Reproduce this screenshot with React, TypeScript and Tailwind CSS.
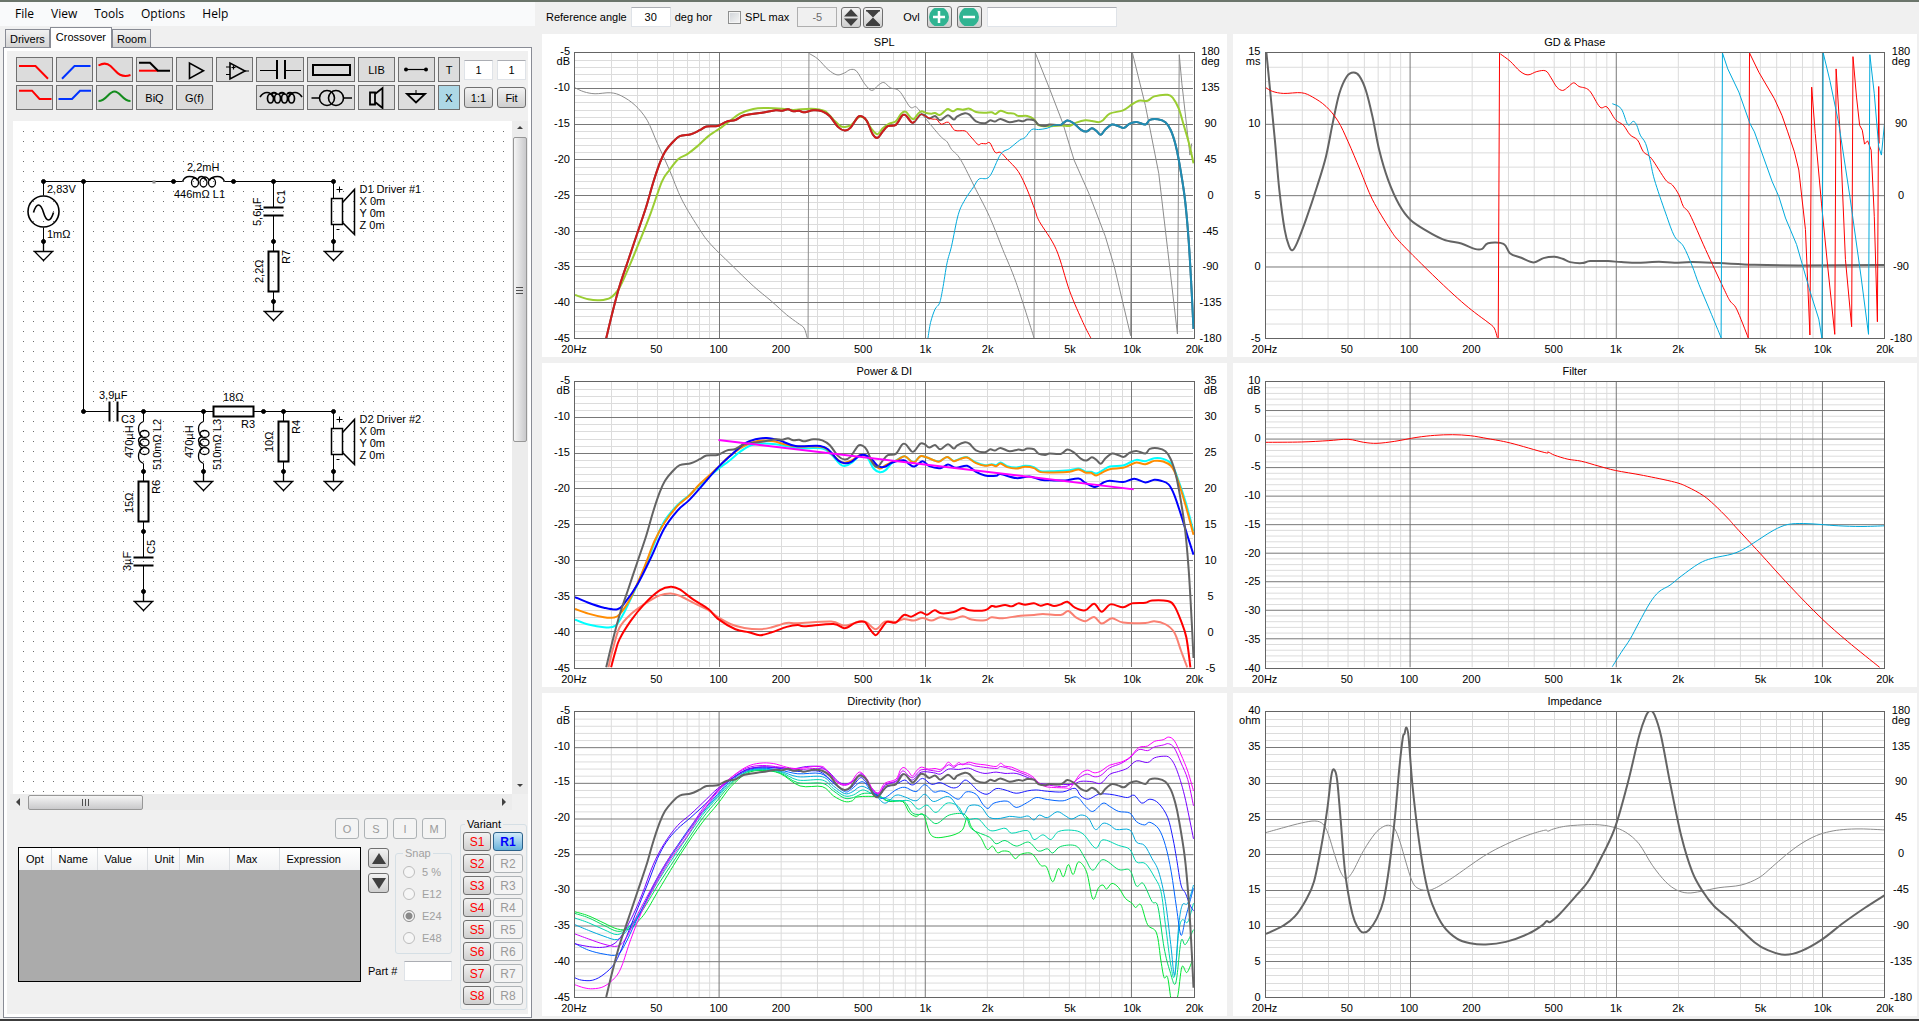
import React, { useState } from 'react'

type Line = {
    color: string
    width: number
    points: string
    straight?: boolean
}

type ChartProps = {
    title: string
    box: [number, number, number, number]
    rows: number
    left: string[]
    leftUnit: string
    right?: string[]
    rightUnit?: string
    lines: Line[]
}

const GREY = '#646464'
const THIN_GREY = '#8c8c8c'

const ON_AXIS =
    '170,1018 185,935 200,860 220,780 240,700 260,620 275,550 290,490 302,455 318,428 335,408 360,402 380,390 395,379 420,377 440,364 460,359 480,345 520,337 550,330 565,331 578,327 590,333 603,331 613,336 635,330 655,333 672,348 690,380 705,391 718,383 735,350 745,349 755,362 768,402 779,413 790,395 802,378 820,374 834,346 842,345 855,366 862,365 875,343 885,345 895,355 908,347 920,360 937,345 950,358 958,348 975,339 985,343 1000,363 1020,369 1032,360 1042,364 1055,356 1075,366 1095,361 1105,363 1115,358 1130,360 1140,373 1155,377 1165,373 1190,374 1205,361 1220,370 1235,388 1248,394 1260,384 1270,392 1280,404 1290,388 1305,373 1320,378 1332,383 1345,370 1360,365 1380,373 1390,359 1408,357 1425,366 1437,390 1447,430 1455,480 1468,590 1477,720 1484,880 1488,990'

function parse(points: string): number[][] {
    return points.split(' ').map((p) => p.split(',').map(Number))
}

// part of the on-axis curve between two x positions, moved vertically by dy
function onAxis(from: number, to: number, dy = 0) {
    return parse(ON_AXIS)
        .filter(([x]) => x >= from && x <= to)
        .map(([x, y]) => `${x},${y + dy}`)
        .join(' ')
}

// Catmull-Rom spline through the points
function toPath(points: string, straight?: boolean) {
    const p = parse(points)
    let d = `M${p[0][0]} ${p[0][1]}`
    for (let i = 0; i < p.length - 1; i++) {
        const a = p[i - 1] || p[i]
        const b = p[i]
        const c = p[i + 1]
        const e = p[i + 2] || c
        if (straight) {
            d += `L${c[0]} ${c[1]}`
        } else {
            d += `C${b[0] + (c[0] - a[0]) / 6} ${b[1] + (c[1] - a[1]) / 6} ${
                c[0] - (e[0] - b[0]) / 6
            } ${c[1] - (e[1] - b[1]) / 6} ${c[0]} ${c[1]}`
        }
    }
    return d
}

const FREQS = [20, 50, 100, 200, 500, 1000, 2000, 5000, 10000, 20000]
const logPos = (f: number) => Math.log10(f / 20) / 3

const GRID_FREQS: number[] = []
for (const decade of [10, 100, 1000, 10000]) {
    for (let i = 1; i < 10; i++) {
        const f = i * decade
        if (f > 20 && f < 20000) GRID_FREQS.push(f)
    }
}

function freqLabel(f: number) {
    if (f === 20) return '20Hz'
    return f >= 1000 ? `${f / 1000}k` : `${f}`
}

const DB_TICKS = ['-5', '-10', '-15', '-20', '-25', '-30', '-35', '-40', '-45']
const DEG_TICKS = ['180', '135', '90', '45', '0', '-45', '-90', '-135', '-180']

const charts: ChartProps[] = [
    {
        title: 'SPL',
        box: [100, 157, 1388, 861],
        rows: 40,
        left: DB_TICKS,
        leftUnit: 'dB',
        right: DEG_TICKS,
        rightUnit: 'deg',
        lines: [
            {
                color: THIN_GREY,
                width: 1,
                points: '100,262 120,274 145,280 180,277 205,287 235,315 262,360 285,430 312,510 340,600 380,690 405,735 450,795 500,860 540,905 575,947 600,972 614,987 621,1016'
            },
            { color: THIN_GREY, width: 1, straight: true, points: '623,1018 625,157' },
            {
                color: THIN_GREY,
                width: 1,
                points: '626,159 645,175 668,207 688,223 705,217 718,207 732,212 750,250 766,270 780,255 793,246 808,262 828,272 852,320 866,320 885,352 920,408 935,425 945,448 965,478 1000,570 1030,650 1060,750 1090,850 1130,1016'
            },
            {
                color: THIN_GREY,
                width: 1,
                straight: true,
                points: '1130,1018 1133,157 1165,265 1195,370 1220,480 1253,580 1290,710 1310,800 1347,1010 1351,157 1380,315 1410,520 1430,750 1452,1005 1456,162 1462,250 1480,465 1484,430'
            },
            {
                color: '#9acd32',
                width: 2,
                points: '100,887 130,900 155,903 180,895 200,865 222,800 245,725 270,640 295,545 312,510 332,477 352,462 375,438 400,407 430,380 445,365 470,340 500,326 530,323 565,325 590,329 630,325 660,332 680,358 695,377 706,380 720,374 735,352 745,350 755,362 765,385 779,402 790,385 805,370 820,363 832,340 842,334 852,350 860,357 870,340 878,333 888,338 900,340 908,338 918,344 930,332 937,326 948,333 958,326 970,328 985,325 1000,335 1020,337 1035,336 1044,341 1055,331 1070,338 1085,340 1095,347 1115,347 1130,357 1140,375 1155,378 1190,376 1210,377 1225,367 1245,360 1260,362 1275,366 1285,360 1300,340 1330,330 1350,312 1365,301 1385,301 1400,288 1430,283 1442,293 1455,325 1465,370 1478,430 1488,490'
            },
            { color: GREY, width: 2, points: onAxis(170, 1488) },
            { color: '#d01c1c', width: 2, points: onAxis(170, 862) },
            {
                color: '#ff0000',
                width: 1,
                points: '862,365 875,343 885,347 900,356 912,358 922,372 938,366 952,390 975,392 985,405 995,420 1005,434 1012,430 1022,431 1031,428 1043,457 1055,457 1070,478 1095,515 1115,570 1132,630 1142,665 1180,750 1210,875 1240,970 1258,1018'
            },
            { color: '#1e8cb4', width: 2, points: onAxis(1190, 1488) },
            {
                color: '#00aadc',
                width: 1,
                points: '892,1018 898,970 908,930 918,912 925,870 935,790 945,740 960,645 975,600 995,560 1007,537 1030,530 1055,463 1075,445 1098,420 1110,412 1125,388 1140,388 1160,384 1175,375 1190,374'
            }
        ]
    },
    {
        title: 'GD & Phase',
        box: [100, 157, 1393, 861],
        rows: 20,
        left: ['15', '10', '5', '0', '-5'],
        leftUnit: 'ms',
        right: ['180', '90', '0', '-90', '-180'],
        rightUnit: 'deg',
        lines: [
            {
                color: GREY,
                width: 2,
                points: '101,157 110,280 120,420 130,570 142,690 152,740 160,752 170,730 190,660 215,560 235,470 250,370 265,280 282,228 297,216 310,226 325,270 340,350 355,450 375,540 400,615 425,660 460,692 500,720 540,732 570,748 587,748 600,731 635,733 650,762 675,775 703,789 725,776 750,772 768,778 785,788 812,791 830,785 870,785 900,788 940,790 985,787 1020,790 1060,788 1120,791 1200,796 1300,798 1493,797'
            },
            {
                color: '#ff0000',
                width: 1,
                points: '100,262 115,273 140,279 180,277 205,290 235,318 262,362 285,425 312,510 340,600 380,690 400,725 450,793 500,858 540,907 570,940 600,970 614,987 621,1016'
            },
            { color: '#ff0000', width: 1, straight: true, points: '623,1018 626,157' },
            {
                color: '#ff0000',
                width: 1,
                points: '628,160 650,182 672,212 690,223 710,213 730,211 742,232 755,260 768,270 780,260 793,247 805,258 828,270 852,320 868,320 887,358 905,375 920,404 937,420 950,455 968,475 1000,540 1015,555 1030,585 1040,620 1055,645 1090,750 1130,865 1145,905 1160,930 1186,1016'
            },
            {
                color: '#ff0000',
                width: 1,
                straight: true,
                points: '1186,1018 1189,157 1210,215 1245,295 1262,345 1275,395 1290,455 1300,510 1315,690 1325,1008 1329,260 1337,400 1351,610 1365,800 1381,1006 1384,205 1393,400 1405,780 1419,983 1422,168 1430,290 1437,375 1443,390 1448,432 1455,422 1463,450 1470,650 1477,968 1480,258 1481,430'
            },
            {
                color: '#00aadc',
                width: 1,
                points: '880,310 900,325 915,373 927,363 935,375 943,405 955,430 965,480 975,540 1000,640 1020,710 1040,740 1060,800 1075,855 1100,935 1125,1016'
            },
            {
                color: '#00aadc',
                width: 1,
                straight: true,
                points: '1125,1018 1128,157 1140,205 1165,275 1190,370 1200,395 1240,545 1255,590 1270,655 1295,735 1325,875 1345,960 1352,1018 1355,157 1370,240 1390,370 1415,590 1440,830 1457,1006 1460,162 1470,280 1480,440 1486,465 1493,370'
            }
        ]
    },
    {
        title: 'Power & DI',
        box: [100, 79, 1388, 861],
        rows: 40,
        left: DB_TICKS,
        leftUnit: 'dB',
        right: ['35', '30', '25', '20', '15', '10', '5', '0', '-5'],
        rightUnit: 'dB',
        lines: [
            {
                color: '#fa8072',
                width: 2,
                points: '175,940 185,885 200,820 225,780 255,750 290,723 315,717 335,724 365,745 400,768 420,788 450,810 480,821 515,825 540,820 575,806 600,807 675,802 705,814 740,801 755,805 775,825 795,802 820,803 838,794 860,799 880,791 900,799 920,789 945,796 970,786 990,796 1020,798 1035,789 1060,792 1100,784 1130,782 1150,779 1190,782 1207,770 1225,790 1245,801 1265,788 1282,808 1305,792 1330,805 1380,806 1400,801 1425,810 1445,835 1460,890 1474,940'
            },
            {
                color: '#ff0000',
                width: 2,
                points: '181,940 190,895 200,855 225,800 255,750 290,708 315,697 335,705 365,735 400,765 420,793 460,825 490,834 515,843 540,835 575,818 600,812 615,816 680,809 705,822 730,805 750,803 762,825 775,843 785,828 800,803 820,805 838,782 855,787 875,774 890,781 907,768 922,777 950,773 970,761 985,768 1020,768 1035,755 1045,757 1065,752 1080,756 1095,747 1110,751 1130,747 1145,754 1160,749 1175,755 1190,750 1205,742 1222,760 1245,768 1265,748 1282,772 1302,750 1330,759 1350,747 1380,745 1395,738 1430,740 1445,755 1460,800 1472,850 1481,940'
            },
            {
                color: '#00ffff',
                width: 2,
                points: '100,796 130,811 165,819 190,815 210,775 235,705 262,620 280,560 300,500 330,450 355,422 380,390 420,343 445,318 470,290 495,270 520,265 550,267 600,278 655,280 675,298 695,327 707,332 722,322 740,300 755,305 770,340 784,351 797,345 810,325 825,312 840,303 855,318 863,319 875,303 890,307 905,315 918,318 935,305 950,317 965,310 980,306 1000,322 1020,330 1035,327 1045,330 1055,322 1070,333 1090,337 1110,332 1130,336 1145,348 1175,348 1210,345 1230,340 1245,349 1258,350 1270,355 1285,345 1300,334 1330,331 1345,322 1360,314 1380,318 1400,309 1420,311 1438,325 1450,360 1470,440 1488,530'
            },
            {
                color: '#ff8c00',
                width: 2,
                points: '100,764 130,778 165,789 185,790 200,780 225,730 255,640 278,560 300,505 330,453 355,424 380,387 420,338 445,305 480,272 510,257 545,258 570,267 600,274 655,275 675,295 695,319 707,322 722,315 740,299 755,303 770,325 784,340 797,330 825,313 840,303 855,319 863,320 875,303 890,307 905,315 918,319 935,305 950,318 965,311 980,307 1000,324 1020,332 1035,329 1045,333 1055,325 1070,336 1090,340 1110,335 1130,339 1145,351 1175,352 1210,350 1230,343 1245,352 1258,353 1270,361 1285,351 1300,342 1330,338 1345,330 1360,322 1380,327 1400,317 1420,319 1438,333 1450,365 1470,450 1488,540'
            },
            {
                color: '#0000ff',
                width: 2,
                points: '100,728 130,745 165,760 195,765 212,745 240,690 270,610 300,522 330,467 355,437 380,400 420,338 450,300 480,265 505,252 530,248 560,256 595,272 650,272 670,285 690,315 705,324 720,320 740,300 752,300 768,315 780,333 795,335 812,322 838,315 850,327 862,334 880,318 895,333 920,339 937,328 955,338 980,332 1000,350 1020,361 1045,362 1055,357 1090,369 1120,364 1145,374 1175,376 1200,376 1230,370 1245,383 1268,396 1285,383 1300,377 1330,381 1355,371 1380,382 1400,374 1415,377 1432,388 1445,420 1460,480 1475,545 1488,600'
            },
            { color: GREY, width: 2, points: onAxis(170, 1488, -78) },
            { color: '#ff00ff', width: 2, straight: true, points: '422,254 1354,403' }
        ]
    },
    {
        title: 'Filter',
        box: [100, 79, 1393, 861],
        rows: 50,
        left: ['10', '5', '0', '-5', '-10', '-15', '-20', '-25', '-30', '-35', '-40'],
        leftUnit: 'dB',
        lines: [
            {
                color: '#ff0000',
                width: 1,
                points: '100,261 180,260 240,256 285,252 320,261 350,264 390,258 440,246 480,240 520,238 560,241 600,250 650,263 728,292 735,290 750,300 780,312 810,318 850,333 887,346 950,361 1020,381 1050,396 1085,422 1110,450 1140,490 1160,520 1212,595 1280,695 1351,792 1410,862 1482,940'
            },
            {
                color: '#00aadc',
                width: 1,
                points: '880,938 900,895 920,855 940,805 965,745 985,712 1010,692 1035,665 1075,627 1105,611 1150,598 1180,580 1215,550 1245,525 1275,509 1310,506 1350,509 1390,513 1440,515 1493,513'
            }
        ]
    },
    {
        title: 'Directivity (hor)',
        box: [100, 76, 1388, 864],
        rows: 40,
        left: DB_TICKS,
        leftUnit: 'dB',
        lines: [
            {
                color: '#00e632',
                width: 1,
                points: '100,681 130,693 165,715 195,733 222,733 245,705 262,675 290,610 340,500 385,412 420,355 450,302 485,262 520,253 560,262 605,300 655,302 680,330 705,347 722,345 735,333 782,333 805,347 835,347 850,380 865,392 882,387 900,450 935,453 968,435 980,395 990,425 1010,455 1025,492 1037,482 1048,502 1060,497 1075,500 1088,520 1100,507 1125,505 1145,540 1158,545 1172,590 1185,550 1196,575 1207,538 1218,568 1230,530 1248,560 1262,642 1275,608 1285,600 1293,612 1305,595 1320,608 1335,640 1350,655 1358,668 1370,660 1385,720 1405,745 1415,830 1422,880 1430,880 1440,960 1452,940 1462,848 1473,865 1485,830'
            },
            {
                color: '#00dc64',
                width: 1,
                points: '100,686 130,699 165,722 195,740 218,730 245,690 290,592 340,490 385,400 420,343 450,295 485,258 520,252 560,260 600,290 655,292 680,315 705,337 725,335 750,322 782,328 800,345 838,347 858,383 885,388 910,414 940,388 975,387 990,430 1030,455 1045,475 1065,465 1090,482 1118,470 1140,497 1160,490 1172,503 1190,483 1225,482 1245,520 1262,555 1285,523 1320,553 1345,555 1360,603 1375,595 1395,650 1408,665 1422,790 1435,860 1448,897 1460,770 1470,780 1488,735'
            },
            {
                color: '#00d7b4',
                width: 1,
                points: '100,700 130,714 165,735 195,750 218,730 245,685 290,580 340,478 385,390 420,335 450,290 485,258 520,250 560,257 600,282 655,282 680,308 705,330 725,327 745,312 765,322 790,335 820,345 850,345 870,370 890,358 910,380 935,352 960,362 978,400 1005,400 1032,435 1065,428 1080,443 1115,435 1130,462 1150,448 1168,462 1185,438 1215,434 1240,445 1268,488 1285,463 1320,480 1345,492 1360,530 1380,535 1400,575 1415,620 1425,720 1438,850 1446,872 1455,740 1463,705 1475,712 1488,655'
            },
            {
                color: '#00aadc',
                width: 1,
                points: '100,720 130,737 165,755 195,765 215,740 240,700 290,570 330,485 375,400 420,330 450,285 485,255 520,248 560,255 600,272 655,272 680,300 705,323 722,318 738,303 750,303 770,320 795,352 820,328 840,333 865,345 885,325 905,347 940,333 970,385 985,360 1010,362 1030,395 1055,398 1075,392 1100,395 1117,391 1130,403 1142,388 1160,396 1182,378 1200,390 1215,400 1235,388 1252,397 1268,432 1285,413 1300,418 1315,432 1345,433 1360,470 1378,480 1395,520 1410,560 1425,650 1437,780 1446,872 1455,720 1463,660 1475,655 1488,600'
            },
            {
                color: '#0064ff',
                width: 1,
                points: '100,777 130,797 165,809 195,811 212,780 235,715 262,640 290,565 330,480 375,395 420,325 450,280 485,252 520,246 560,252 600,263 650,262 675,285 705,317 720,310 738,290 750,290 765,315 790,338 820,312 840,304 865,317 885,296 905,318 920,315 935,320 960,340 978,318 1000,325 1015,355 1027,368 1040,352 1070,346 1090,365 1115,350 1135,335 1160,341 1195,345 1225,333 1245,360 1262,377 1285,352 1300,362 1320,377 1345,382 1360,408 1378,418 1390,410 1410,430 1425,480 1438,560 1450,670 1460,752 1470,700 1480,650 1488,610'
            },
            {
                color: '#1919ff',
                width: 1,
                points: '100,881 115,888 140,888 165,870 190,835 210,775 235,690 262,600 285,520 305,470 330,430 360,395 400,345 425,308 450,280 485,250 520,243 560,247 600,256 640,254 660,265 685,297 705,312 720,305 738,277 748,280 765,310 782,330 797,305 820,295 840,282 852,295 862,295 880,277 900,295 920,290 945,305 960,302 975,282 990,295 1005,315 1025,325 1045,308 1065,312 1090,322 1115,315 1135,312 1160,316 1195,318 1222,307 1235,330 1252,340 1275,325 1300,325 1320,330 1340,335 1355,328 1372,352 1390,340 1410,353 1430,395 1442,460 1450,520 1460,600 1470,625 1480,660 1488,678'
            },
            {
                color: '#7800ff',
                width: 1,
                points: '100,778 125,785 155,789 180,783 200,762 225,705 250,630 275,540 300,475 330,420 360,385 395,340 420,308 450,280 485,252 520,242 560,245 590,248 620,241 650,242 670,258 690,286 705,294 720,288 738,268 748,270 765,305 782,325 797,297 820,287 830,270 838,264 857,282 877,258 905,260 920,264 938,249 961,250 983,246 1000,255 1020,262 1045,258 1065,262 1090,262 1115,274 1130,282 1145,293 1175,295 1215,295 1235,286 1260,287 1280,292 1300,265 1320,256 1340,246 1360,224 1385,229 1400,215 1420,210 1435,215 1450,250 1468,330 1488,460'
            },
            {
                color: '#c800ff',
                width: 1,
                points: '100,748 130,763 165,779 195,785 215,760 240,690 280,590 315,510 350,445 385,372 420,312 450,275 485,246 520,238 560,243 600,250 650,247 670,260 690,290 705,298 720,290 738,265 748,267 765,305 782,322 797,295 820,285 830,262 838,255 857,275 877,251 905,254 920,255 938,236 950,244 961,235 983,234 1000,240 1045,247 1055,241 1080,250 1115,268 1130,280 1142,294 1165,298 1200,302 1220,288 1235,272 1250,264 1265,272 1280,268 1300,245 1325,232 1345,215 1365,190 1385,193 1400,182 1420,176 1432,172 1445,185 1460,230 1475,280 1488,360'
            },
            {
                color: '#ff00ff',
                width: 1,
                points: '100,902 120,911 140,914 165,907 190,880 205,845 225,765 250,680 280,600 315,520 350,455 385,380 420,318 450,275 485,242 515,231 545,232 575,243 600,247 650,240 665,253 685,285 705,296 720,287 735,260 745,262 758,285 770,315 782,320 795,292 820,280 830,252 838,244 848,255 857,270 866,255 877,243 893,249 908,247 920,250 930,240 938,228 950,240 961,229 970,236 983,228 1000,233 1020,236 1045,241 1055,231 1065,240 1080,243 1100,255 1115,262 1130,275 1142,292 1160,303 1200,306 1210,308 1220,290 1235,262 1250,252 1265,260 1280,255 1300,237 1325,228 1345,213 1365,184 1385,179 1400,165 1420,160 1432,152 1445,163 1460,205 1475,255 1488,315'
            },
            { color: GREY, width: 2, points: onAxis(170, 1488, -79) }
        ]
    },
    {
        title: 'Impedance',
        box: [100, 76, 1393, 864],
        rows: 40,
        left: ['40', '35', '30', '25', '20', '15', '10', '5', '0'],
        leftUnit: 'ohm',
        right: DEG_TICKS,
        rightUnit: 'deg',
        lines: [
            {
                color: THIN_GREY,
                width: 1,
                points: '100,441 140,426 180,412 210,406 228,415 240,445 255,510 268,560 280,580 295,560 320,495 345,445 362,425 376,419 390,430 402,470 415,530 428,585 440,608 460,616 480,610 520,578 590,513 640,477 690,449 728,434 735,437 748,430 780,421 840,417 880,424 910,440 940,475 970,540 1000,590 1025,615 1050,624 1080,619 1120,608 1170,600 1210,578 1240,545 1270,510 1305,475 1340,450 1370,438 1400,432 1440,430 1493,433'
            },
            {
                color: GREY,
                width: 2,
                points: '100,748 140,722 165,695 190,645 208,590 225,480 238,370 247,270 253,250 260,280 268,400 278,560 290,660 300,710 312,738 320,744 332,736 350,700 365,645 378,540 390,400 400,250 408,155 412,142 416,123 421,150 430,300 445,470 460,590 475,660 500,725 530,762 560,776 595,780 640,772 690,748 722,722 732,709 740,712 760,690 800,630 825,590 850,530 885,430 915,290 940,150 955,90 965,72 975,85 990,150 1010,290 1035,450 1060,560 1085,622 1110,665 1150,710 1200,773 1230,797 1268,811 1305,800 1351,766 1400,715 1450,668 1493,631'
            }
        ]
    }
]

function Ticks({ labels, unit, side }: { labels: string[]; unit: string; side: 'left' | 'right' }) {
    return (
        <div
            className={
                side === 'left'
                    ? 'relative -mt-px mb-px flex w-8 flex-col items-end justify-between pr-1 leading-3'
                    : 'relative -mt-px mb-px flex w-8 flex-col items-center justify-between leading-3'
            }>
            {labels.map((label) => (
                <span key={label} className="flex h-0 items-center">
                    {label}
                </span>
            ))}
            <span className={side === 'left' ? 'absolute top-1 right-1' : 'absolute top-1'}>{unit}</span>
        </div>
    )
}

function Chart({ title, box, rows, left, leftUnit, right, rightUnit, lines }: ChartProps) {
    const [x0, y0, w, h] = box
    const step = rows / (left.length - 1)
    return (
        <section className="flex min-h-0 min-w-0 flex-col bg-white">
            <h2 className="h-[18px] text-center leading-4">{title}</h2>
            <div className="flex min-h-0 flex-1">
                <Ticks labels={left} unit={leftUnit} side="left" />
                <svg
                    className="h-full min-w-0 flex-1 border border-[#646464]"
                    viewBox={`${x0} ${y0} ${w} ${h}`}
                    preserveAspectRatio="none">
                    <g shapeRendering="crispEdges" strokeWidth="1">
                        {Array.from({ length: rows - 1 }, (_, i) => i + 1)
                            .filter((i) => i % step !== 0)
                            .map((i) => (
                                <path
                                    key={i}
                                    d={`M${x0} ${y0 + (h * i) / rows}h${w}`}
                                    stroke="#dcdcdc"
                                    vectorEffect="non-scaling-stroke"
                                />
                            ))}
                        {GRID_FREQS.map((f) => (
                            <path
                                key={f}
                                d={`M${x0 + w * logPos(f)} ${y0}v${h}`}
                                stroke={[100, 1000, 10000].includes(f) ? '#787878' : '#dcdcdc'}
                                vectorEffect="non-scaling-stroke"
                            />
                        ))}
                        {left.slice(1, -1).map((label, i) => (
                            <path
                                key={label}
                                d={`M${x0} ${y0 + (h * (i + 1) * step) / rows}h${w}`}
                                stroke="#787878"
                                vectorEffect="non-scaling-stroke"
                            />
                        ))}
                    </g>
                    {lines.map((line, i) => (
                        <path
                            key={i}
                            d={toPath(line.points, line.straight)}
                            fill="none"
                            stroke={line.color}
                            strokeWidth={line.width}
                            strokeLinejoin="round"
                            vectorEffect="non-scaling-stroke"
                        />
                    ))}
                </svg>
                {right ? (
                    <Ticks labels={right} unit={rightUnit || ''} side="right" />
                ) : (
                    <div className="w-8" />
                )}
            </div>
            <div className="relative mx-8 h-[18px]">
                {FREQS.map((f) => (
                    <span
                        key={f}
                        className="absolute top-1 -translate-x-1/2 leading-3"
                        style={{ left: `${logPos(f) * 100}%` }}>
                        {freqLabel(f)}
                    </span>
                ))}
            </div>
        </section>
    )
}

function Dot({ x, y }: { x: number; y: number }) {
    return <circle cx={x} cy={y} r="2" fill="#000" />
}

// dot, short lead and the triangle below it
function Ground({ x, y }: { x: number; y: number }) {
    return (
        <g>
            <Dot x={x} y={y} />
            <path d={`M${x} ${y}v10M${x - 9} ${y + 10}h18l-9 9z`} strokeWidth="1.3" />
        </g>
    )
}

function Resistor({ x, y, horizontal }: { x: number; y: number; horizontal?: boolean }) {
    return horizontal ? (
        <rect x={x} y={y - 5} width="40" height="10" strokeWidth="2" />
    ) : (
        <rect x={x - 5} y={y} width="10" height="40" strokeWidth="2" />
    )
}

function Coil({ transform }: { transform: string }) {
    return (
        <g transform={transform} strokeWidth="1.3">
            <path d="M0 0q2 -5 7 -5q6 0 8 4M42 0q-2 -5 -7 -5q-6 0 -8 4" />
            <path d="M15 -1q1 -4 4 -4q3 0 4 4M20 -4q4 -2 7 3" />
            <ellipse cx="12.500" cy="1" rx="3.500" ry="4.500" />
            <ellipse cx="21" cy="1" rx="3.500" ry="4.500" />
            <ellipse cx="29.500" cy="1" rx="3.500" ry="4.500" />
        </g>
    )
}

function Label({ x, y, vertical, children }: { x: number; y: number; vertical?: boolean; children: string }) {
    return (
        <text
            x={x}
            y={y}
            fill="#000"
            stroke="none"
            transform={vertical ? `rotate(-90 ${x} ${y})` : undefined}>
            {children}
        </text>
    )
}

function Driver({ x, y, name }: { x: number; y: number; name: string }) {
    return (
        <g>
            <Dot x={x} y={y} />
            <path d={`M${x} ${y}v17M${x} ${y + 43}v17`} />
            <rect x={x - 2} y={y + 17} width="11" height="26" strokeWidth="1.5" />
            <path d={`M${x + 9} ${y + 21}l12 -13v45l-12 -12`} strokeWidth="1.5" />
            <Ground x={x} y={y + 60} />
            <path d={`M${x + 3} ${y + 8}h6m-3 -3v6M${x + 3} ${y + 48}h3`} />
            <Label x={x + 26} y={y + 11}>
                {name}
            </Label>
            <Label x={x + 26} y={y + 23}>
                X 0m
            </Label>
            <Label x={x + 26} y={y + 35}>
                Y 0m
            </Label>
            <Label x={x + 26} y={y + 47}>
                Z 0m
            </Label>
        </g>
    )
}

function Schematic() {
    return (
        <svg className="h-full w-full text-[11px]" fill="none" stroke="#000">
            <defs>
                <pattern id="dots" width="10" height="10" patternUnits="userSpaceOnUse">
                    <rect x="0" y="0" width="1" height="1" fill="#6e6e6e" stroke="none" />
                </pattern>
            </defs>
            <svg x="10" y="10" width="482" height="661">
                <rect width="100%" height="100%" fill="url(#dots)" stroke="none" />
            </svg>

            {/* woofer branch */}
            <g strokeWidth="1" transform="translate(0.5 0.5)">
                <path d="M30 60h139M211 60h109M30 60v14M30 106v14M70 60v230" />
                <circle cx="30" cy="90" r="15.500" strokeWidth="1.6" />
                <path d="M20 91c3 -10 7 -10 10 0s7 10 10 0" strokeWidth="1.6" />
                <Ground x={30} y={120} />
                <Dot x={30} y={60} />
                <Dot x={70} y={60} />
                <Dot x={160} y={60} />
                <Dot x={220} y={60} />
                <Dot x={260} y={60} />
                <rect x="139" y="59" width="3" height="3" fill="#8c8c8c" stroke="none" />
                <Coil transform="translate(169 60)" />
                <path d="M260 60v26M260 94v36M260 170v10" />
                <path d="M250 86h20M250 94h20" strokeWidth="2" />
                <Dot x={260} y={120} />
                <Resistor x={260} y={130} />
                <Ground x={260} y={180} />
                <Driver x={320} y={60} name="D1 Driver #1" />
            </g>
            <Label x={34} y={72}>
                2,83V
            </Label>
            <Label x={34} y={117}>
                1mΩ
            </Label>
            <Label x={174} y={50}>
                2,2mH
            </Label>
            <Label x={161} y={77}>
                446mΩ L1
            </Label>
            <Label x={272} y={83} vertical>
                C1
            </Label>
            <Label x={248} y={105} vertical>
                5,6µF
            </Label>
            <Label x={250} y={162} vertical>
                2,2Ω
            </Label>
            <Label x={277} y={143} vertical>
                R7
            </Label>

            {/* tweeter branch */}
            <g strokeWidth="1" transform="translate(0.5 0.5)">
                <path d="M70 290h26M104 290h96M240 290h80" />
                <path d="M96 280v20M104 280v20" strokeWidth="2" />
                <Dot x={70} y={290} />
                <Dot x={130} y={290} />
                <Dot x={190} y={290} />
                <Dot x={250} y={290} />
                <Dot x={270} y={290} />
                <Resistor x={200} y={290} horizontal />
                <path d="M130 290v10M130 342v18M130 400v36M130 444v26" />
                <Coil transform="translate(130 300) rotate(90) scale(1 -1)" />
                <Dot x={130} y={350} />
                <Resistor x={130} y={360} />
                <Dot x={130} y={410} />
                <path d="M120 436h20M120 444h20" strokeWidth="2" />
                <Ground x={130} y={470} />
                <path d="M190 290v10M190 342v8M270 290v10M270 340v10" />
                <Coil transform="translate(190 300) rotate(90) scale(1 -1)" />
                <Ground x={190} y={350} />
                <Resistor x={270} y={300} />
                <Ground x={270} y={350} />
                <Driver x={320} y={290} name="D2 Driver #2" />
            </g>
            <Label x={86} y={278}>
                3,9µF
            </Label>
            <Label x={108} y={302}>
                C3
            </Label>
            <Label x={210} y={280}>
                18Ω
            </Label>
            <Label x={228} y={307}>
                R3
            </Label>
            <Label x={120} y={337} vertical>
                470µH
            </Label>
            <Label x={148} y={349} vertical>
                510mΩ L2
            </Label>
            <Label x={180} y={337} vertical>
                470µH
            </Label>
            <Label x={208} y={349} vertical>
                510mΩ L3
            </Label>
            <Label x={260} y={331} vertical>
                10Ω
            </Label>
            <Label x={287} y={313} vertical>
                R4
            </Label>
            <Label x={120} y={392} vertical>
                15Ω
            </Label>
            <Label x={147} y={373} vertical>
                R6
            </Label>
            <Label x={118} y={450} vertical>
                3µF
            </Label>
            <Label x={142} y={433} vertical>
                C5
            </Label>
        </svg>
    )
}

function Tool({ label, wide, children }: { label: string; wide?: boolean; children: React.ReactNode }) {
    return (
        <button
            aria-label={label}
            className="flex h-[25px] items-center justify-center border border-[#707070] bg-[#dcdcdc]">
            <svg
                width={wide ? 46 : 35}
                height="23"
                viewBox={wide ? '1 1 46 23' : '1 1 35 23'}
                fill="none"
                stroke="#000"
                strokeWidth="2">
                {children}
            </svg>
        </button>
    )
}

function TextTool({ children, active }: { children: string; active?: boolean }) {
    return (
        <button
            className={
                active
                    ? 'h-[25px] border border-[#707070] bg-[#add8e6]'
                    : 'h-[25px] border border-[#707070] bg-[#dcdcdc]'
            }>
            {children}
        </button>
    )
}

const winButton = 'rounded-[3px] border border-[#707070] bg-gradient-to-b from-[#f2f2f2] to-[#cfcfcf]'
const disabledButton = 'rounded-[3px] border border-[#adb2b5] bg-[#f4f4f4] text-[#9a9a9a]'
const textBox = 'border border-[#dfe3e8] border-t-[#abadb3] bg-white outline-none'

function Toolbar() {
    return (
        <div className="grid grid-cols-[repeat(6,37px)_48px_48px_37px_37px_22px_30px_30px] gap-[3px] pt-[6px] pl-[9px]">
            <Tool label="Low pass">
                <path d="M3 9h16.500l12.500 12.700" stroke="#f00" />
            </Tool>
            <Tool label="High pass">
                <path d="M6 21.700l12.500 -12.700h16" stroke="#0032ff" />
            </Tool>
            <Tool label="All pass">
                <path d="M2.500 8.500q7 -4 12 0.500q3 3 5 5q6 7 15 4" stroke="#f00" />
            </Tool>
            <Tool label="Shelf">
                <path d="M3 13.700h19" stroke="#f00" />
                <path d="M3 5.700h11l8 8h12" />
            </Tool>
            <Tool label="Buffer">
                <path d="M13.500 6v15.500l14 -7.800z" strokeWidth="1.6" />
            </Tool>
            <Tool label="Op amp">
                <path d="M14 6v16l15 -8z" strokeWidth="1.6" />
                <path d="M10 10h4M10 17.500h4M29 14h4M15.500 10.500h4M17.500 8.500v4" strokeWidth="1.2" />
            </Tool>
            <Tool label="Capacitor" wide>
                <path d="M4 13.500h17M29 13.500h16" strokeWidth="1" />
                <path d="M21 3v19M29 3v19" />
            </Tool>
            <Tool label="Resistor" wide>
                <rect x="6" y="8" width="37" height="10" />
            </Tool>
            <TextTool>LIB</TextTool>
            <Tool label="Wire">
                <path d="M7 12.500h22" strokeWidth="1.200" />
                <circle cx="8" cy="12.500" r="2" fill="#000" stroke="none" />
                <circle cx="28" cy="12.500" r="2" fill="#000" stroke="none" />
            </Tool>
            <TextTool>T</TextTool>
            <input
                aria-label="Sheet"
                defaultValue="1"
                className={`${textBox} ml-px h-5 w-[29px] self-center text-center`}
            />
            <input
                aria-label="Part count"
                defaultValue="1"
                className={`${textBox} ml-px h-5 w-[29px] self-center text-center`}
            />

            <Tool label="Low shelf">
                <path d="M3 5.700h13l7.500 8.300h12" stroke="#f00" />
            </Tool>
            <Tool label="High shelf">
                <path d="M2.500 14h13.500l8 -8.300h11" stroke="#0032ff" />
            </Tool>
            <Tool label="Peak">
                <path d="M2.500 16c8 0 10 -9.500 16 -9.500s8 9.500 16 9.500" stroke="#148c1e" />
            </Tool>
            <TextTool>BiQ</TextTool>
            <TextTool>G(f)</TextTool>
            <span />
            <Tool label="Inductor" wide>
                <g strokeWidth="1.7">
                    <path d="M4 12q3 -4.500 7 -4.500q4 0 6 4.500M46 12q-3 -4.500 -7 -4.500q-4 0 -6 4.500" />
                    <path d="M15 9q3 -2.500 6 0M23 9q3 -2.500 6 0M31 9q3 -2.500 6 0" />
                    <ellipse cx="14.500" cy="13.500" rx="3" ry="4.500" />
                    <ellipse cx="21.500" cy="13.500" rx="3" ry="4.500" />
                    <ellipse cx="28.500" cy="13.500" rx="3" ry="4.500" />
                    <ellipse cx="35.500" cy="13.500" rx="3" ry="4.500" />
                </g>
            </Tool>
            <Tool label="Transformer" wide>
                <circle cx="20" cy="13" r="7.500" strokeWidth="1.6" />
                <circle cx="29" cy="13" r="7.500" strokeWidth="1.6" />
                <path d="M4.500 13h8M36.500 13h8.500" strokeWidth="1.6" />
            </Tool>
            <Tool label="Driver">
                <path d="M12 7.500h5v12h-5zM17 9l7.500 -6v20l-7.500 -6" strokeWidth="1.8" />
            </Tool>
            <Tool label="Ground">
                <path d="M18 5v4" strokeWidth="1" />
                <path d="M9 9h18l-9 8.500z" strokeWidth="1.8" />
            </Tool>
            <TextTool active>X</TextTool>
            <button className={`${winButton} ml-px h-[21px] w-[29px] self-center`}>1:1</button>
            <button className={`${winButton} ml-px h-[21px] w-[29px] self-center`}>Fit</button>
        </div>
    )
}

function Arrow({ d }: { d: string }) {
    return (
        <svg width="16" height="16" className="shrink-0">
            <path d={d} fill="#404040" />
        </svg>
    )
}

function SchematicView() {
    return (
        <div className="mt-[11px] flex min-h-0 flex-1 flex-col">
            <div className="flex min-h-0 flex-1 pl-[6px]">
                <div className="min-w-0 flex-1 overflow-hidden bg-white">
                    <Schematic />
                </div>
                <div className="flex w-4 flex-col bg-[#ececec]">
                    <Arrow d="M5 8l3 -3l3 3z" />
                    <div className="mx-px flex h-[305px] items-center justify-center rounded-[2px] border border-[#979797] bg-gradient-to-r from-[#f5f5f5] to-[#c9c9cb]">
                        <svg width="8" height="8">
                            <path d="M0 1.500h7M0 4.500h7M0 7.500h7" stroke="#505050" />
                        </svg>
                    </div>
                    <div className="flex-1" />
                    <Arrow d="M5 6l3 3l3 -3z" />
                </div>
            </div>
            <div className="mr-4 ml-[3px] flex h-4 items-center bg-[#ececec]">
                <Arrow d="M10 4l-4 4l4 4z" />
                <div className="ml-0.5 flex h-[15px] w-[115px] items-center justify-center rounded-[2px] border border-[#979797] bg-gradient-to-b from-[#f5f5f5] to-[#c9c9cb]">
                    <svg width="8" height="7">
                        <path d="M0.500 0v7M3.500 0v7M6.500 0v7" stroke="#505050" />
                    </svg>
                </div>
                <div className="flex-1" />
                <Arrow d="M6 4l4 4l-4 4z" />
            </div>
        </div>
    )
}

const COLUMNS = [
    ['Opt', 'w-[32px]'],
    ['Name', 'w-[46px]'],
    ['Value', 'w-[50px]'],
    ['Unit', 'w-[32px]'],
    ['Min', 'w-[50px]'],
    ['Max', 'w-[50px]'],
    ['Expression', '']
]

function PartEditor() {
    const [snap, setSnap] = useState('E24')
    return (
        <div className="flex min-w-0 flex-1 flex-col gap-2">
            <div className="flex justify-end gap-[5px] pr-[6px]">
                {['O', 'S', 'I', 'M'].map((t) => (
                    <button key={t} disabled className={`${disabledButton} h-[21px] w-6`}>
                        {t}
                    </button>
                ))}
            </div>
            <div className="flex gap-[7px]">
                <div className="h-[135px] flex-1 border border-black bg-[#ababab]">
                    <table className="w-full table-fixed border-collapse bg-gradient-to-b from-white to-[#f1f2f4]">
                        <thead>
                            <tr className="h-[22px]">
                                {COLUMNS.map(([name, width]) => (
                                    <th
                                        key={name}
                                        className={`${width} border-r border-[#dcdfe3] pl-[7px] text-left font-normal last:border-r-0`}>
                                        {name}
                                    </th>
                                ))}
                            </tr>
                        </thead>
                    </table>
                </div>
                <div className="flex w-[84px] flex-col gap-[7px]">
                    <div className="flex gap-[6px]">
                        <div className="flex flex-col gap-[5px] pt-px">
                            <button
                                aria-label="Move up"
                                className={`${winButton} flex h-5 w-[21px] items-center justify-center`}>
                                <svg width="14" height="11">
                                    <path d="M0 11l7 -11l7 11z" fill="#404040" />
                                </svg>
                            </button>
                            <button
                                aria-label="Move down"
                                className={`${winButton} flex h-5 w-[21px] items-center justify-center`}>
                                <svg width="14" height="11">
                                    <path d="M0 0l7 11l7 -11z" fill="#404040" />
                                </svg>
                            </button>
                        </div>
                        <fieldset
                            disabled
                            className="flex flex-1 flex-col gap-[9px] rounded-[3px] border border-[#d5dfe5] pt-[6px] pb-[9px] pl-[7px] text-[#a0a0a0]">
                            <legend className="px-0.5 leading-3">Snap</legend>
                            {['5 %', 'E12', 'E24', 'E48'].map((s) => (
                                <label key={s} className="flex h-[13px] items-center gap-[7px] leading-3">
                                    <input
                                        type="radio"
                                        name="snap"
                                        checked={snap === s}
                                        onChange={() => setSnap(s)}
                                        className="size-3 appearance-none rounded-full border border-[#bcbcbc] bg-[#f6f6f6] checked:border-[#8c8c8c] checked:bg-[radial-gradient(circle,#8a8a8a_3px,#f6f6f6_4px)]"
                                    />
                                    {s}
                                </label>
                            ))}
                        </fieldset>
                    </div>
                    <label className="flex h-5 items-center justify-between whitespace-nowrap">
                        Part #
                        <input className={`${textBox} h-5 w-12`} />
                    </label>
                </div>
            </div>
        </div>
    )
}

function VariantPanel() {
    const [variant, setVariant] = useState(1)
    return (
        <fieldset className="w-[67px] rounded-[3px] border border-[#d5dfe5] px-0.5 pt-0.5 pb-1">
            <legend className="ml-0.5 px-0.5 leading-3">Variant</legend>
            <div className="grid grid-cols-[28px_30px] gap-x-0.5 gap-y-[3px]">
                {[1, 2, 3, 4, 5, 6, 7, 8].map((n) => (
                    <React.Fragment key={n}>
                        <button
                            onClick={() => setVariant(n)}
                            className={`${winButton} h-[19px] text-xs leading-4 text-[#f00]`}>
                            S{n}
                        </button>
                        {n === variant ? (
                            <button className="h-[19px] rounded-[3px] border border-[#2c628b] bg-gradient-to-b from-[#d2ebf9] to-[#68b3db] text-xs leading-4 font-bold text-[#00f]">
                                R{n}
                            </button>
                        ) : (
                            <button disabled className={`${disabledButton} h-[19px] text-xs leading-4`}>
                                R{n}
                            </button>
                        )}
                    </React.Fragment>
                ))}
            </div>
        </fieldset>
    )
}

function ChartToolbar() {
    return (
        <div className="flex h-[30px] items-center pl-[11px]">
            <label className="flex items-center gap-1">
                Reference angle
                <input defaultValue="30" className={`${textBox} h-5 w-10 text-center`} />
            </label>
            <span className="ml-1">deg hor</span>
            <label className="ml-4 flex items-center gap-1">
                <input
                    type="checkbox"
                    className="size-[13px] appearance-none border border-[#8e8f8f] bg-gradient-to-br from-[#cfd3d8] to-[#f6f6f6] shadow-[inset_0_0_0_1px_#f4f4f4]"
                />
                SPL max
            </label>
            <input
                aria-label="Maximum level"
                disabled
                defaultValue="-5"
                className="ml-2 h-5 w-10 border border-[#afafaf] bg-[#f0f0f0] text-center text-[#6d6d6d]"
            />
            <button
                aria-label="Expand range"
                className={`${winButton} ml-1 flex h-[21px] w-5 items-center justify-center`}>
                <svg width="14" height="17">
                    <path d="M0 7.500l7 -7.500l7 7.500zM0 9.500l7 7.500l7 -7.500z" fill="#404040" />
                </svg>
            </button>
            <button
                aria-label="Shrink range"
                className={`${winButton} ml-0.5 flex h-[21px] w-5 items-center justify-center`}>
                <svg width="14" height="17">
                    <path d="M0 1h14v1.500h-1l-6 6l-6 -6h-1zM7 8.500l7 7v1.500h-14v-1.500z" fill="#404040" />
                </svg>
            </button>
            <span className="ml-5">Ovl</span>
            <button
                aria-label="Add overlay"
                className={`${winButton} ml-[7px] flex h-[22px] w-[25px] items-center justify-center`}>
                <svg width="20" height="18">
                    <circle cx="10" cy="9" r="10" fill="#30b492" />
                    <path d="M4 9h12M10 3v12" stroke="#fff" strokeWidth="2.500" />
                </svg>
            </button>
            <button
                aria-label="Remove overlay"
                className={`${winButton} ml-[5px] flex h-[22px] w-[25px] items-center justify-center`}>
                <svg width="20" height="18">
                    <circle cx="10" cy="9" r="10" fill="#30b492" />
                    <path d="M4 9h12" stroke="#fff" strokeWidth="2.500" />
                </svg>
            </button>
            <input aria-label="Overlay name" className={`${textBox} ml-[5px] h-5 w-[130px] px-1`} />
        </div>
    )
}

function App() {
    const [tab, setTab] = useState('Crossover')
    return (
        <div className="flex h-screen min-h-[900px] min-w-[1280px] flex-col border-t-2 border-b-2 border-t-[#6b756b] border-b-[#3c3c3c] bg-[#f0f0f0] font-['Liberation_Sans',Arial,sans-serif] text-[11px] leading-[14px] text-black">
            <div className="flex min-h-0 flex-1">
                <div className="flex w-[535px] shrink-0 flex-col">
                    <nav className="flex h-6 items-center gap-[17px] bg-[#f9fafb] pl-[15px] font-['Open_Sans',sans-serif] text-xs">
                        {['File', 'View', 'Tools', 'Options', 'Help'].map((item) => (
                            <button key={item}>{item}</button>
                        ))}
                    </nav>
                    <div className="flex h-[21px] items-end pl-[5px]" role="tablist">
                        {['Drivers', 'Crossover', 'Room'].map((name) => (
                            <button
                                key={name}
                                role="tab"
                                aria-selected={tab === name}
                                onClick={() => setTab(name)}
                                className={
                                    tab === name
                                        ? 'relative top-px h-[21px] border border-b-0 border-[#898c95] bg-white px-[5px] pb-[2px]'
                                        : 'h-[18px] border border-b-0 border-[#898c95] bg-gradient-to-b from-[#f2f2f2] to-[#d4d4d4] px-[4px]'
                                }>
                                {name}
                            </button>
                        ))}
                    </div>
                    <main className="mr-[3px] mb-px ml-[3px] flex min-h-0 flex-1 flex-col border border-[#898c95] bg-white p-[3px]">
                        <div className="flex min-h-0 flex-1 flex-col bg-[#f0f0f0]">
                            <Toolbar />
                            <SchematicView />
                            <div className="flex gap-2 pt-2 pr-px pb-1 pl-[11px]">
                                <PartEditor />
                                <VariantPanel />
                            </div>
                        </div>
                    </main>
                </div>
                <div className="flex min-w-0 flex-1 flex-col">
                    <ChartToolbar />
                    <div className="grid min-h-0 flex-1 grid-cols-2 grid-rows-3 gap-[6px] pt-0.5 pr-0.5 pb-[3px] pl-[7px]">
                        {charts.map((chart) => (
                            <Chart key={chart.title} {...chart} />
                        ))}
                    </div>
                </div>
            </div>
        </div>
    )
}

export default App
